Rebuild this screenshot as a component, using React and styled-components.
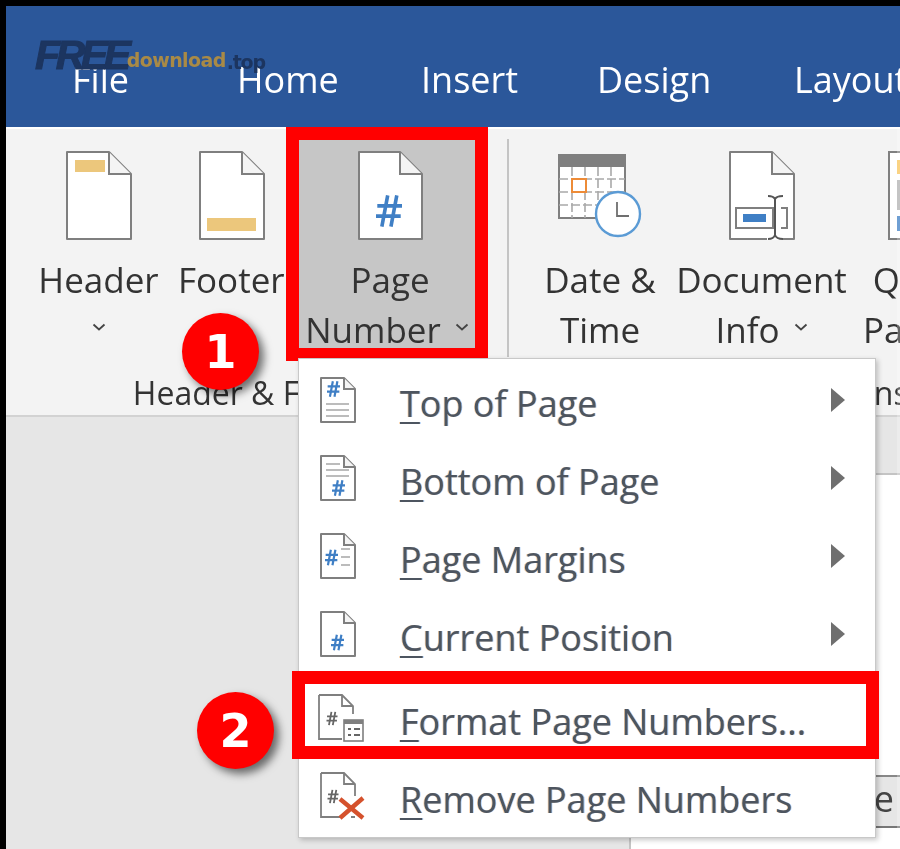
import styled, { createGlobalStyle } from "styled-components";

const GlobalStyle = createGlobalStyle`
  html, body {
    margin: 0;
    background: #000;
    overflow: hidden;
  }
`;

const FONT = `"Open Sans", "Noto Sans", sans-serif`;

const ORANGE = "#ecc77c";
const BLUE = "#3f7fc5";
const LINE = "#7f7f7f";

function Sheet({ w, h, fold, stroke = 2, children }) {
  const s = stroke / 2;
  return (
    <svg width={w} height={h} viewBox={`0 0 ${w} ${h}`}>
      <path
        d={`M${s} ${s}H${w - fold - s}L${w - s} ${fold + s}V${h - s}H${s}Z`}
        fill="#fff"
        stroke={LINE}
        strokeWidth={stroke}
        strokeLinejoin="round"
      />
      <path
        d={`M${w - fold - s} ${s}V${fold + s}H${w - s}`}
        fill="#f4f4f4"
        stroke={LINE}
        strokeWidth={stroke}
      />
      {children}
    </svg>
  );
}

function Hash({ x, y, size, color = BLUE, width = 2.2 }) {
  const a = size / 2;
  const b = a * 1.2;
  return (
    <path
      d={`M${x - a * 0.1} ${y - b}L${x - a * 0.55} ${y + b}M${x + a * 0.6} ${y - b}L${x + a * 0.15} ${y + b}M${x - a * 0.9} ${y - b * 0.33}H${x + a}M${x - a} ${y + b * 0.33}H${x + a * 0.9}`}
      stroke={color}
      strokeWidth={width}
      fill="none"
    />
  );
}

function Chevron() {
  return (
    <ChevronIcon width="14" height="8" viewBox="0 0 14 8">
      <path d="M1.5 1.5L7 6.5L12.5 1.5" fill="none" stroke="#444" strokeWidth="1.8" />
    </ChevronIcon>
  );
}

function HeaderIcon() {
  return (
    <Sheet w={66} h={89} fold={22}>
      <rect x="9" y="9" width="30" height="12" fill={ORANGE} />
    </Sheet>
  );
}

function FooterIcon() {
  return (
    <Sheet w={66} h={89} fold={22}>
      <rect x="8" y="67" width="49" height="13" fill={ORANGE} />
    </Sheet>
  );
}

function PageNumberIcon() {
  return (
    <Sheet w={65} h={89} fold={22}>
      <Hash x={31} y={60} size={26} width={3.6} />
    </Sheet>
  );
}

function CalendarIcon() {
  return (
    <svg width="84" height="89" viewBox="0 0 84 89">
      <rect x="1" y="4" width="66" height="63" fill="#fff" stroke={LINE} strokeWidth="2" />
      <rect x="1" y="4" width="66" height="12" fill={LINE} />
      <path
        d="M14 16V67M27 16V67M40 16V67M53 16V67M1 28H67M1 41H67M1 54H67"
        stroke="#a9a9a9"
        strokeWidth="1.6"
        strokeDasharray="9 3"
        fill="none"
      />
      <rect x="14" y="28" width="14" height="13" fill="#fff" stroke="#ed8b37" strokeWidth="2" />
      <circle cx="60" cy="63" r="22" fill="#fff" stroke="#5b9bd5" strokeWidth="2.4" />
      <path d="M59 51V65H71" fill="none" stroke="#6f6f6f" strokeWidth="1.8" />
    </svg>
  );
}

function DocInfoIcon() {
  return (
    <Sheet w={66} h={89} fold={22}>
      <path d="M7 57H44V77H7Z" fill="#fff" stroke={LINE} strokeWidth="2" />
      <rect x="14" y="63" width="23" height="8" fill={BLUE} />
      <path d="M52 57H58V77H52" fill="none" stroke={LINE} strokeWidth="2" />
      <rect x="38" y="80" width="16" height="10" fill="#fff" />
      <path
        d="M39 45C43 45 45 46 46 48V84C45 87 43 88 39 88M54 45C50 45 47 46 46 48M46 84C47 87 50 88 54 88"
        fill="none"
        stroke="#555"
        strokeWidth="2"
      />
    </Sheet>
  );
}

function QuickPartsIcon() {
  return (
    <svg width="84" height="89" viewBox="0 0 84 89">
      <rect x="1" y="1" width="82" height="87" fill="#fff" stroke={LINE} strokeWidth="2" />
      <rect x="9" y="9" width="66" height="14" fill="#f9c45a" />
      <rect x="9" y="29" width="66" height="30" fill="#b0b0b0" />
      <rect x="9" y="65" width="66" height="15" fill={BLUE} />
    </svg>
  );
}

function TopIcon() {
  return (
    <Sheet w={36} h={46} fold={11}>
      <Hash x={13.5} y={12} size={13} />
      <path d="M6 27H29M6 33H29M6 39H29" stroke="#a6a6a6" strokeWidth="1.6" />
    </Sheet>
  );
}

function BottomIcon() {
  return (
    <Sheet w={36} h={46} fold={11}>
      <path d="M6 9H20M6 15H29M6 21H29" stroke="#a6a6a6" strokeWidth="1.6" />
      <Hash x={18.5} y={33} size={13} />
    </Sheet>
  );
}

function MarginsIcon() {
  return (
    <Sheet w={36} h={46} fold={11}>
      <Hash x={11.5} y={24.5} size={13} />
      <path d="M21 16H30M21 24H30M21 32H30" stroke="#a6a6a6" strokeWidth="1.6" />
    </Sheet>
  );
}

function CurrentIcon() {
  return (
    <Sheet w={36} h={46} fold={11}>
      <Hash x={17.5} y={31.5} size={13} />
    </Sheet>
  );
}

function FormatIcon() {
  return (
    <svg width="46" height="48" viewBox="0 0 46 48">
      <path d="M1 1H24L35 12V20M24 1V12H35M1 1V45H24" fill="none" stroke={LINE} strokeWidth="1.8" />
      <Hash x={14} y={24.5} size={11} color="#666" width={1.8} />
      <rect x="26" y="26" width="19" height="21" fill="#fff" stroke={LINE} strokeWidth="1.6" />
      <rect x="26" y="26" width="19" height="4" fill={LINE} />
      <path d="M30 35H33M36 35H42M30 41H33M36 41H42" stroke="#666" strokeWidth="2" />
    </svg>
  );
}

function RemoveIcon() {
  return (
    <svg width="45" height="48" viewBox="0 0 45 48">
      <path
        d="M1 1H24L35 12V24M24 1V12H35M1 1V45H20M31 45H35"
        fill="none"
        stroke={LINE}
        strokeWidth="1.8"
      />
      <Hash x={13} y={24.5} size={11} color="#666" width={1.8} />
      <path d="M20 46L43 26M20 27L43 46" stroke="#d5512c" strokeWidth="4.4" fill="none" />
    </svg>
  );
}

const TABS = [
  { name: "File", width: 165 },
  { name: "Home", width: 184 },
  { name: "Insert", width: 176 },
  { name: "Design", width: 197 },
  { name: "Layout", width: 160 },
];

const MENU_ITEMS = [
  { key: "T", rest: "op of Page", icon: <TopIcon />, more: true },
  { key: "B", rest: "ottom of Page", icon: <BottomIcon />, more: true },
  { key: "P", rest: "age Margins", icon: <MarginsIcon />, more: true },
  { key: "C", rest: "urrent Position", icon: <CurrentIcon />, more: true },
  { key: "F", rest: "ormat Page Numbers...", icon: <FormatIcon />, marked: true, pull: 2 },
  { key: "R", rest: "emove Page Numbers", icon: <RemoveIcon /> },
];

export default function App() {
  return (
    <Frame>
      <GlobalStyle />
      <TitleBar>
        {TABS.map((tab) => (
          <Tab key={tab.name} $width={tab.width}>{tab.name}</Tab>
        ))}
      </TitleBar>

      <Ribbon>
        <Group $width={501}>
          <Tools $inset={33}>
            <Tool $width={119}>
              <HeaderIcon />
              <ToolLabel>Header</ToolLabel>
              <ToolLabel><Chevron /></ToolLabel>
            </Tool>
            <Tool $width={108} $gap={20}>
              <FooterIcon />
              <ToolLabel $flush>Footer</ToolLabel>
            </Tool>
            <PickedTool>
              <PageNumberIcon />
              <ToolLabel $nudge={6}>Page</ToolLabel>
              <ToolLabel>Number<Chevron /></ToolLabel>
            </PickedTool>
          </Tools>
          <GroupLabel>Header &amp; Footer</GroupLabel>
        </Group>
        <Divider />
        <Group $width={798}>
          <Tools $inset={32}>
            <Tool $width={118}>
              <CalendarIcon />
              <ToolLabel>Date &amp;</ToolLabel>
              <ToolLabel>Time</ToolLabel>
            </Tool>
            <Tool $width={173} $gap={16}>
              <DocInfoIcon />
              <ToolLabel>Document</ToolLabel>
              <ToolLabel>Info<Chevron /></ToolLabel>
            </Tool>
            <Tool $width={132} $gap={5} $iconShift={22}>
              <QuickPartsIcon />
              <ToolLabel>Quick</ToolLabel>
              <ToolLabel>Parts<Chevron /></ToolLabel>
            </Tool>
          </Tools>
          <GroupLabel>Insert</GroupLabel>
        </Group>
      </Ribbon>

      <Workspace>
        <DocColumn>
          <DocSheet />
          <DocTabs>e</DocTabs>
          <DocFoot />
        </DocColumn>
      </Workspace>

      <Menu>
        {MENU_ITEMS.map((item, i) => (
          <MenuRow key={item.key} $marked={item.marked} $split={i === 4}>
            <MenuIcon $pull={item.pull}>{item.icon}</MenuIcon>
            <MenuText>
              <Mnemonic>{item.key}</Mnemonic>
              {item.rest}
            </MenuText>
            {item.more && <MoreArrow />}
          </MenuRow>
        ))}
      </Menu>

      <Badge $left={176} $top={307}>1</Badge>
      <Badge $left={191} $top={686}>2</Badge>

      <Watermark>
        <WatermarkFree>FREE</WatermarkFree>
        <WatermarkWord>download</WatermarkWord>
        <WatermarkTop>.top</WatermarkTop>
      </Watermark>
    </Frame>
  );
}

const Frame = styled.div`
  position: relative;
  box-sizing: border-box;
  width: 900px;
  height: 849px;
  padding: 6px 0 0 6px;
  display: flex;
  flex-direction: column;
  overflow: hidden;
  background: #000;
  font-family: ${FONT};
  filter: blur(0.45px);

  &::after {
    content: "";
    position: absolute;
    top: 127px;
    right: 0;
    bottom: 0;
    width: 3px;
    background: rgba(255, 255, 255, 0.25);
  }
`;

const TitleBar = styled.div`
  flex: none;
  box-sizing: border-box;
  height: 121px;
  padding: 0 0 27px 66px;
  display: flex;
  align-items: flex-end;
  background: #2b579a;
  white-space: nowrap;
`;

const Tab = styled.div`
  flex: none;
  width: ${(p) => p.$width}px;
  font-size: 36px;
  line-height: 40px;
  color: #fff;
`;

const Ribbon = styled.div`
  flex: none;
  box-sizing: border-box;
  height: 290px;
  display: flex;
  background: #f3f3f3;
  border-top: 2px solid #fff;
  border-bottom: 2px solid #d2d2d2;
`;

const Group = styled.div`
  flex: none;
  width: ${(p) => p.$width}px;
  display: flex;
  flex-direction: column;
`;

const Tools = styled.div`
  height: 232px;
  padding-left: ${(p) => p.$inset}px;
  display: flex;
  align-items: flex-start;
`;

const Tool = styled.div`
  flex: none;
  box-sizing: border-box;
  width: ${(p) => p.$width}px;
  margin-left: ${(p) => p.$gap || 0}px;
  padding-top: 22px;
  display: flex;
  flex-direction: column;
  align-items: center;

  > * {
    flex: none;
  }

  > svg {
    margin-bottom: 15px;
    margin-left: ${(p) => p.$iconShift || 0}px;
  }
`;

const PickedTool = styled(Tool)`
  position: relative;
  width: 202px;
  height: 234px;
  margin-top: -2px;
  padding-top: 11px;
  border: 13px solid #f00;
  background: #c6c6c6;

  > svg {
    margin-left: 6px;
  }
`;

const ToolLabel = styled.div`
  align-self: ${(p) => (p.$flush ? "flex-start" : "center")};
  margin-left: ${(p) => p.$nudge || 0}px;
  height: 50px;
  display: flex;
  align-items: center;
  gap: 14px;
  font-size: 35px;
  line-height: 50px;
  color: #333;
  white-space: nowrap;
`;

const ChevronIcon = styled.svg`
  flex: none;
  margin-bottom: 6px;
`;

const GroupLabel = styled.div`
  margin-top: 17px;
  font-size: 32px;
  line-height: 30px;
  text-align: center;
  color: #333;
  white-space: nowrap;
`;

const Divider = styled.div`
  flex: none;
  width: 2px;
  height: 218px;
  margin-top: 10px;
  background: #c4c4c4;
`;

const Workspace = styled.div`
  flex: 1;
  display: flex;
  justify-content: flex-end;
  background: #e6e6e6;
`;

const DocColumn = styled.div`
  width: 271px;
  padding-top: 56px;
  display: flex;
  flex-direction: column;
`;

const DocSheet = styled.div`
  height: 300px;
  background: #fff;
  border-top: 2px solid #c4c4c4;
`;

const DocTabs = styled.div`
  box-sizing: border-box;
  height: 53px;
  padding-right: 6px;
  border-top: 2px solid #888;
  border-bottom: 2px solid #777;
  font-size: 36px;
  line-height: 44px;
  text-align: right;
  color: #444;
`;

const DocFoot = styled.div`
  flex: 1;
  background: #fff;
  border-left: 2px solid #c4c4c4;
`;

const Menu = styled.div`
  position: absolute;
  top: 358px;
  left: 298px;
  box-sizing: border-box;
  width: 578px;
  height: 480px;
  padding: 2px 0;
  background: #fff;
  border: 1px solid #c8c8c8;
  box-shadow: 2px 2px 5px rgba(0, 0, 0, 0.22);
`;

const MenuRow = styled.div`
  position: relative;
  height: 78px;
  margin-top: ${(p) => (p.$split ? 6 : 0)}px;
  padding-left: 21px;
  display: flex;
  align-items: center;

  ${(p) =>
    p.$marked &&
    `
    &::after {
      content: "";
      position: absolute;
      top: -8px;
      left: -7px;
      right: -4px;
      bottom: -2px;
      border: 13px solid #f00;
      box-sizing: border-box;
    }
  `}
`;

const MenuIcon = styled.div`
  width: 80px;
  height: 48px;
  margin-left: ${(p) => -(p.$pull || 0)}px;
  padding-right: ${(p) => p.$pull || 0}px;
  box-sizing: content-box;
  display: flex;
  align-items: center;
`;

const MenuText = styled.div`
  padding-top: 8px;
  font-size: 36px;
  line-height: 44px;
  color: #4d5560;
  text-shadow: -0.8px 0 rgba(235, 150, 60, 0.45), 0.8px 0 rgba(60, 140, 235, 0.45);
  white-space: nowrap;
`;

const Mnemonic = styled.span`
  text-decoration: underline;
  text-decoration-thickness: 2px;
  text-underline-offset: 5px;
`;

const MoreArrow = styled.div`
  position: absolute;
  right: 30px;
  top: 27px;
  width: 0;
  height: 0;
  border-top: 12px solid transparent;
  border-bottom: 12px solid transparent;
  border-left: 14px solid #6f6f6f;
`;

const Badge = styled.div`
  position: absolute;
  top: ${(p) => p.$top}px;
  left: ${(p) => p.$left}px;
  width: 77px;
  height: 77px;
  margin: 6px 0 0 6px;
  display: flex;
  align-items: center;
  justify-content: center;
  border-radius: 50%;
  background: #f00;
  box-shadow: 5px 5px 8px rgba(0, 0, 0, 0.55);
  font-family: "DejaVu Sans", sans-serif;
  font-weight: 700;
  font-size: 46px;
  color: #fff;
`;

const Watermark = styled.div`
  position: absolute;
  top: 32px;
  left: 35px;
  display: flex;
  align-items: baseline;
  white-space: nowrap;
`;

const WatermarkFree = styled.span`
  font-family: "Liberation Sans", sans-serif;
  font-style: italic;
  font-weight: 700;
  font-size: 41px;
  letter-spacing: -4.4px;
  -webkit-text-stroke: 1px #1c3560;
  color: #1c3560;
`;

const WatermarkWord = styled.span`
  position: relative;
  top: -2px;
  margin-left: 0;
  font-family: "DejaVu Sans", sans-serif;
  font-weight: 700;
  font-size: 19px;
  letter-spacing: -0.6px;
  color: #a98a46;
`;

const WatermarkTop = styled(WatermarkWord)`
  top: 0;
  margin-left: 1px;
  letter-spacing: -1.2px;
  color: #1c3560;
`;
